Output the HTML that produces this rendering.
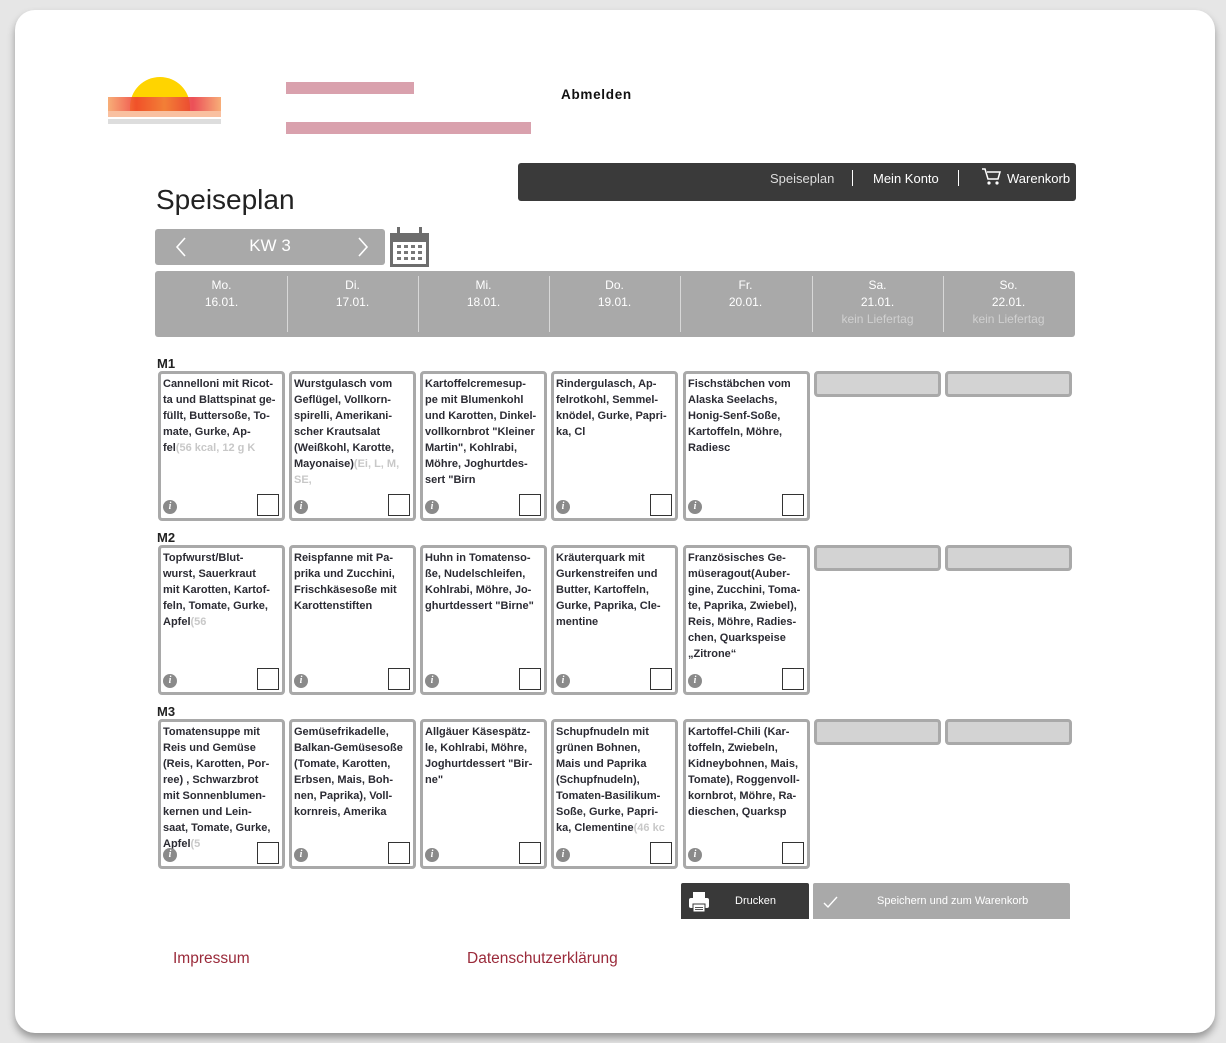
<!DOCTYPE html>
<html><head><meta charset="utf-8"><style>
*{margin:0;padding:0;box-sizing:border-box}
body{width:1226px;height:1043px;background:#e6e6e6;font-family:"Liberation Sans",Arial,sans-serif;position:relative;overflow:hidden}
.page{position:absolute;left:15px;top:10px;width:1200px;height:1023px;background:#fff;border-radius:20px;box-shadow:0 5px 8px rgba(0,0,0,.35)}
.a{position:absolute}
.card{position:absolute;width:127px;height:150px;border:3px solid #a9a9a9;border-radius:4px;background:#fff}
.card .t{position:absolute;left:2px;top:2px;font-size:11px;font-weight:bold;line-height:16px;color:#2b2b33;white-space:nowrap}
.card .t span{color:#c8c8c8;font-weight:bold}
.card .i{position:absolute;left:2px;bottom:4px;width:14px;height:14px;border-radius:50%;background:#8a8a8a;color:#fff;font:italic bold 10px/14px "Liberation Serif",serif;text-align:center}
.card .c{position:absolute;right:3px;bottom:2px;width:22px;height:22px;border:1px solid #333;background:#fff}
.empty{position:absolute;width:127px;height:26px;border:3px solid #a9a9a9;border-radius:4px;background:#d3d3d3}
.lbl{position:absolute;left:157px;font-size:13px;font-weight:bold;color:#222}
.day{position:absolute;top:277px;width:131px;text-align:center;color:#fff;font-size:12px;line-height:17px}
.day i{font-style:normal;color:#d0d0d0}
.div{position:absolute;top:276px;width:1px;height:56px;background:#d8d8d8}
</style></head><body>
<div class="page"></div>
<div class="a" style="left:130px;top:77px;width:60px;height:40px;border-radius:30px 30px 0 0;background:#ffd400"></div>
<div class="a" style="left:108px;top:97px;width:113px;height:14px;background:linear-gradient(90deg,#f6a060,#ee3a30,#f07040,#e8303a,#f6a060);opacity:.85"></div>
<div class="a" style="left:108px;top:111px;width:113px;height:6px;background:#f9c0a0"></div>
<div class="a" style="left:108px;top:119px;width:113px;height:5px;background:#ddd"></div>
<div class="a" style="left:286px;top:82px;width:128px;height:12px;background:#d08a98;opacity:.8"></div>
<div class="a" style="left:286px;top:122px;width:245px;height:12px;background:#d08a98;opacity:.8"></div>
<div class="a" style="left:561px;top:87px;font-size:13.5px;font-weight:bold;letter-spacing:.7px;color:#111">Abmelden</div>
<div class="a" style="left:518px;top:163px;width:558px;height:38px;background:#3a3a3a;border-radius:3px"></div>
<div class="a" style="left:770px;top:171px;font-size:13px;color:#ddd">Speiseplan</div>
<div class="a" style="left:852px;top:170px;width:1px;height:16px;background:#fff"></div>
<div class="a" style="left:873px;top:171px;font-size:13px;color:#fff">Mein Konto</div>
<div class="a" style="left:958px;top:170px;width:1px;height:16px;background:#fff"></div>
<svg class="a" style="left:981px;top:168px" width="20" height="18" viewBox="0 0 20 18"><path d="M1 1h3l3 10h10l2-7H6" fill="none" stroke="#fff" stroke-width="1.5"/><circle cx="8" cy="15" r="1.6" fill="#fff"/><circle cx="16" cy="15" r="1.6" fill="#fff"/></svg>
<div class="a" style="left:1007px;top:171px;font-size:13px;color:#fff">Warenkorb</div>
<div class="a" style="left:156px;top:184px;font-size:28px;color:#222">Speiseplan</div>
<div class="a" style="left:155px;top:229px;width:230px;height:36px;background:#a9a9a9;border-radius:3px"></div>
<svg class="a" style="left:174px;top:236px" width="14" height="22"><path d="M11 2L3 11l8 9" fill="none" stroke="#fff" stroke-width="1.6"/></svg>
<svg class="a" style="left:356px;top:236px" width="14" height="22"><path d="M3 2l8 9-8 9" fill="none" stroke="#fff" stroke-width="1.6"/></svg>
<div class="a" style="left:155px;top:236px;width:230px;text-align:center;font-size:17px;color:#fff">KW 3</div>
<svg class="a" style="left:389px;top:226px" width="41" height="42" viewBox="0 0 41 42"><rect x="1" y="7" width="39" height="34" fill="#6d6d6d"/><rect x="4" y="16" width="33" height="22" fill="#fff"/><rect x="8" y="1" width="3" height="9" fill="#6d6d6d"/><rect x="30" y="1" width="3" height="9" fill="#6d6d6d"/><g fill="#777"><rect x="8" y="19" width="4" height="3"/><rect x="15" y="19" width="4" height="3"/><rect x="22" y="19" width="4" height="3"/><rect x="29" y="19" width="4" height="3"/><rect x="8" y="25" width="4" height="3"/><rect x="15" y="25" width="4" height="3"/><rect x="22" y="25" width="4" height="3"/><rect x="29" y="25" width="4" height="3"/><rect x="8" y="31" width="4" height="3"/><rect x="15" y="31" width="4" height="3"/><rect x="22" y="31" width="4" height="3"/><rect x="29" y="31" width="4" height="3"/></g></svg>
<div class="a" style="left:155px;top:271px;width:920px;height:66px;background:#a9a9a9;border-radius:3px"></div>
<div class="div" style="left:287px"></div><div class="div" style="left:418px"></div><div class="div" style="left:549px"></div><div class="div" style="left:680px"></div><div class="div" style="left:812px"></div><div class="div" style="left:943px"></div>
<div class="day" style="left:156px">Mo.<br>16.01.</div>
<div class="day" style="left:287px">Di.<br>17.01.</div>
<div class="day" style="left:418px">Mi.<br>18.01.</div>
<div class="day" style="left:549px">Do.<br>19.01.</div>
<div class="day" style="left:680px">Fr.<br>20.01.</div>
<div class="day" style="left:812px">Sa.<br>21.01.<br><i>kein Liefertag</i></div>
<div class="day" style="left:943px">So.<br>22.01.<br><i>kein Liefertag</i></div>

<div class="lbl" style="top:356px">M1</div>
<div class="card" style="left:158px;top:371px"><div class="t">Cannelloni mit Ricot-<br>ta und Blattspinat ge-<br>füllt, Buttersoße, To-<br>mate, Gurke, Ap-<br>fel<span>(56 kcal, 12 g K</span></div><div class="i">i</div><div class="c"></div></div>
<div class="card" style="left:289px;top:371px"><div class="t">Wurstgulasch vom<br>Geflügel, Vollkorn-<br>spirelli, Amerikani-<br>scher Krautsalat<br>(Weißkohl, Karotte,<br>Mayonaise)<span>(Ei, L, M,</span><br><span>SE,</span></div><div class="i">i</div><div class="c"></div></div>
<div class="card" style="left:420px;top:371px"><div class="t">Kartoffelcremesup-<br>pe mit Blumenkohl<br>und Karotten, Dinkel-<br>vollkornbrot "Kleiner<br>Martin", Kohlrabi,<br>Möhre, Joghurtdes-<br>sert "Birn</div><div class="i">i</div><div class="c"></div></div>
<div class="card" style="left:551px;top:371px"><div class="t">Rindergulasch, Ap-<br>felrotkohl, Semmel-<br>knödel, Gurke, Papri-<br>ka, Cl</div><div class="i">i</div><div class="c"></div></div>
<div class="card" style="left:683px;top:371px"><div class="t">Fischstäbchen vom<br>Alaska Seelachs,<br>Honig-Senf-Soße,<br>Kartoffeln, Möhre,<br>Radiesc</div><div class="i">i</div><div class="c"></div></div>
<div class="empty" style="left:814px;top:371px"></div><div class="empty" style="left:945px;top:371px"></div>

<div class="lbl" style="top:530px">M2</div>
<div class="card" style="left:158px;top:545px"><div class="t">Topfwurst/Blut-<br>wurst, Sauerkraut<br>mit Karotten, Kartof-<br>feln, Tomate, Gurke,<br>Apfel<span>(56</span></div><div class="i">i</div><div class="c"></div></div>
<div class="card" style="left:289px;top:545px"><div class="t">Reispfanne mit Pa-<br>prika und Zucchini,<br>Frischkäsesoße mit<br>Karottenstiften</div><div class="i">i</div><div class="c"></div></div>
<div class="card" style="left:420px;top:545px"><div class="t">Huhn in Tomatenso-<br>ße, Nudelschleifen,<br>Kohlrabi, Möhre, Jo-<br>ghurtdessert "Birne"</div><div class="i">i</div><div class="c"></div></div>
<div class="card" style="left:551px;top:545px"><div class="t">Kräuterquark mit<br>Gurkenstreifen und<br>Butter, Kartoffeln,<br>Gurke, Paprika, Cle-<br>mentine</div><div class="i">i</div><div class="c"></div></div>
<div class="card" style="left:683px;top:545px"><div class="t">Französisches Ge-<br>müseragout(Auber-<br>gine, Zucchini, Toma-<br>te, Paprika, Zwiebel),<br>Reis, Möhre, Radies-<br>chen, Quarkspeise<br>„Zitrone“</div><div class="i">i</div><div class="c"></div></div>
<div class="empty" style="left:814px;top:545px"></div><div class="empty" style="left:945px;top:545px"></div>

<div class="lbl" style="top:704px">M3</div>
<div class="card" style="left:158px;top:719px"><div class="t">Tomatensuppe mit<br>Reis und Gemüse<br>(Reis, Karotten, Por-<br>ree) , Schwarzbrot<br>mit Sonnenblumen-<br>kernen und Lein-<br>saat, Tomate, Gurke,<br>Apfel<span>(5</span></div><div class="i">i</div><div class="c"></div></div>
<div class="card" style="left:289px;top:719px"><div class="t">Gemüsefrikadelle,<br>Balkan-Gemüsesoße<br>(Tomate, Karotten,<br>Erbsen, Mais, Boh-<br>nen, Paprika), Voll-<br>kornreis, Amerika</div><div class="i">i</div><div class="c"></div></div>
<div class="card" style="left:420px;top:719px"><div class="t">Allgäuer Käsespätz-<br>le, Kohlrabi, Möhre,<br>Joghurtdessert "Bir-<br>ne"</div><div class="i">i</div><div class="c"></div></div>
<div class="card" style="left:551px;top:719px"><div class="t">Schupfnudeln mit<br>grünen Bohnen,<br>Mais und Paprika<br>(Schupfnudeln),<br>Tomaten-Basilikum-<br>Soße, Gurke, Papri-<br>ka, Clementine<span>(46 kc</span></div><div class="i">i</div><div class="c"></div></div>
<div class="card" style="left:683px;top:719px"><div class="t">Kartoffel-Chili (Kar-<br>toffeln, Zwiebeln,<br>Kidneybohnen, Mais,<br>Tomate), Roggenvoll-<br>kornbrot, Möhre, Ra-<br>dieschen, Quarksp</div><div class="i">i</div><div class="c"></div></div>
<div class="empty" style="left:814px;top:719px"></div><div class="empty" style="left:945px;top:719px"></div>

<div class="a" style="left:681px;top:883px;width:128px;height:36px;background:#393939;border-radius:2px 2px 0 0"></div>
<svg class="a" style="left:688px;top:891px" width="22" height="22" viewBox="0 0 22 22"><rect x="5" y="1" width="12" height="6" fill="#fff"/><rect x="1" y="7" width="20" height="10" rx="2" fill="#fff"/><rect x="5" y="13" width="12" height="8" fill="#fff" stroke="#393939" stroke-width="1"/><rect x="7" y="16" width="8" height="1" fill="#555"/><rect x="7" y="18" width="8" height="1" fill="#555"/></svg>
<div class="a" style="left:735px;top:895px;font-size:11px;color:#fff">Drucken</div>
<div class="a" style="left:813px;top:883px;width:257px;height:36px;background:#a9a9a9;border-radius:2px 2px 0 0"></div>
<svg class="a" style="left:823px;top:895px" width="16" height="14"><path d="M1 8l4 4 9-10" fill="none" stroke="#fff" stroke-width="1.4"/></svg>
<div class="a" style="left:877px;top:895px;font-size:11px;color:#fff">Speichern und zum Warenkorb</div>
<div class="a" style="left:173px;top:950px;font-size:15.5px;color:#9a2a3a">Impressum</div>
<div class="a" style="left:467px;top:950px;font-size:15.5px;color:#9a2a3a">Datenschutzerklärung</div>
</body></html>
